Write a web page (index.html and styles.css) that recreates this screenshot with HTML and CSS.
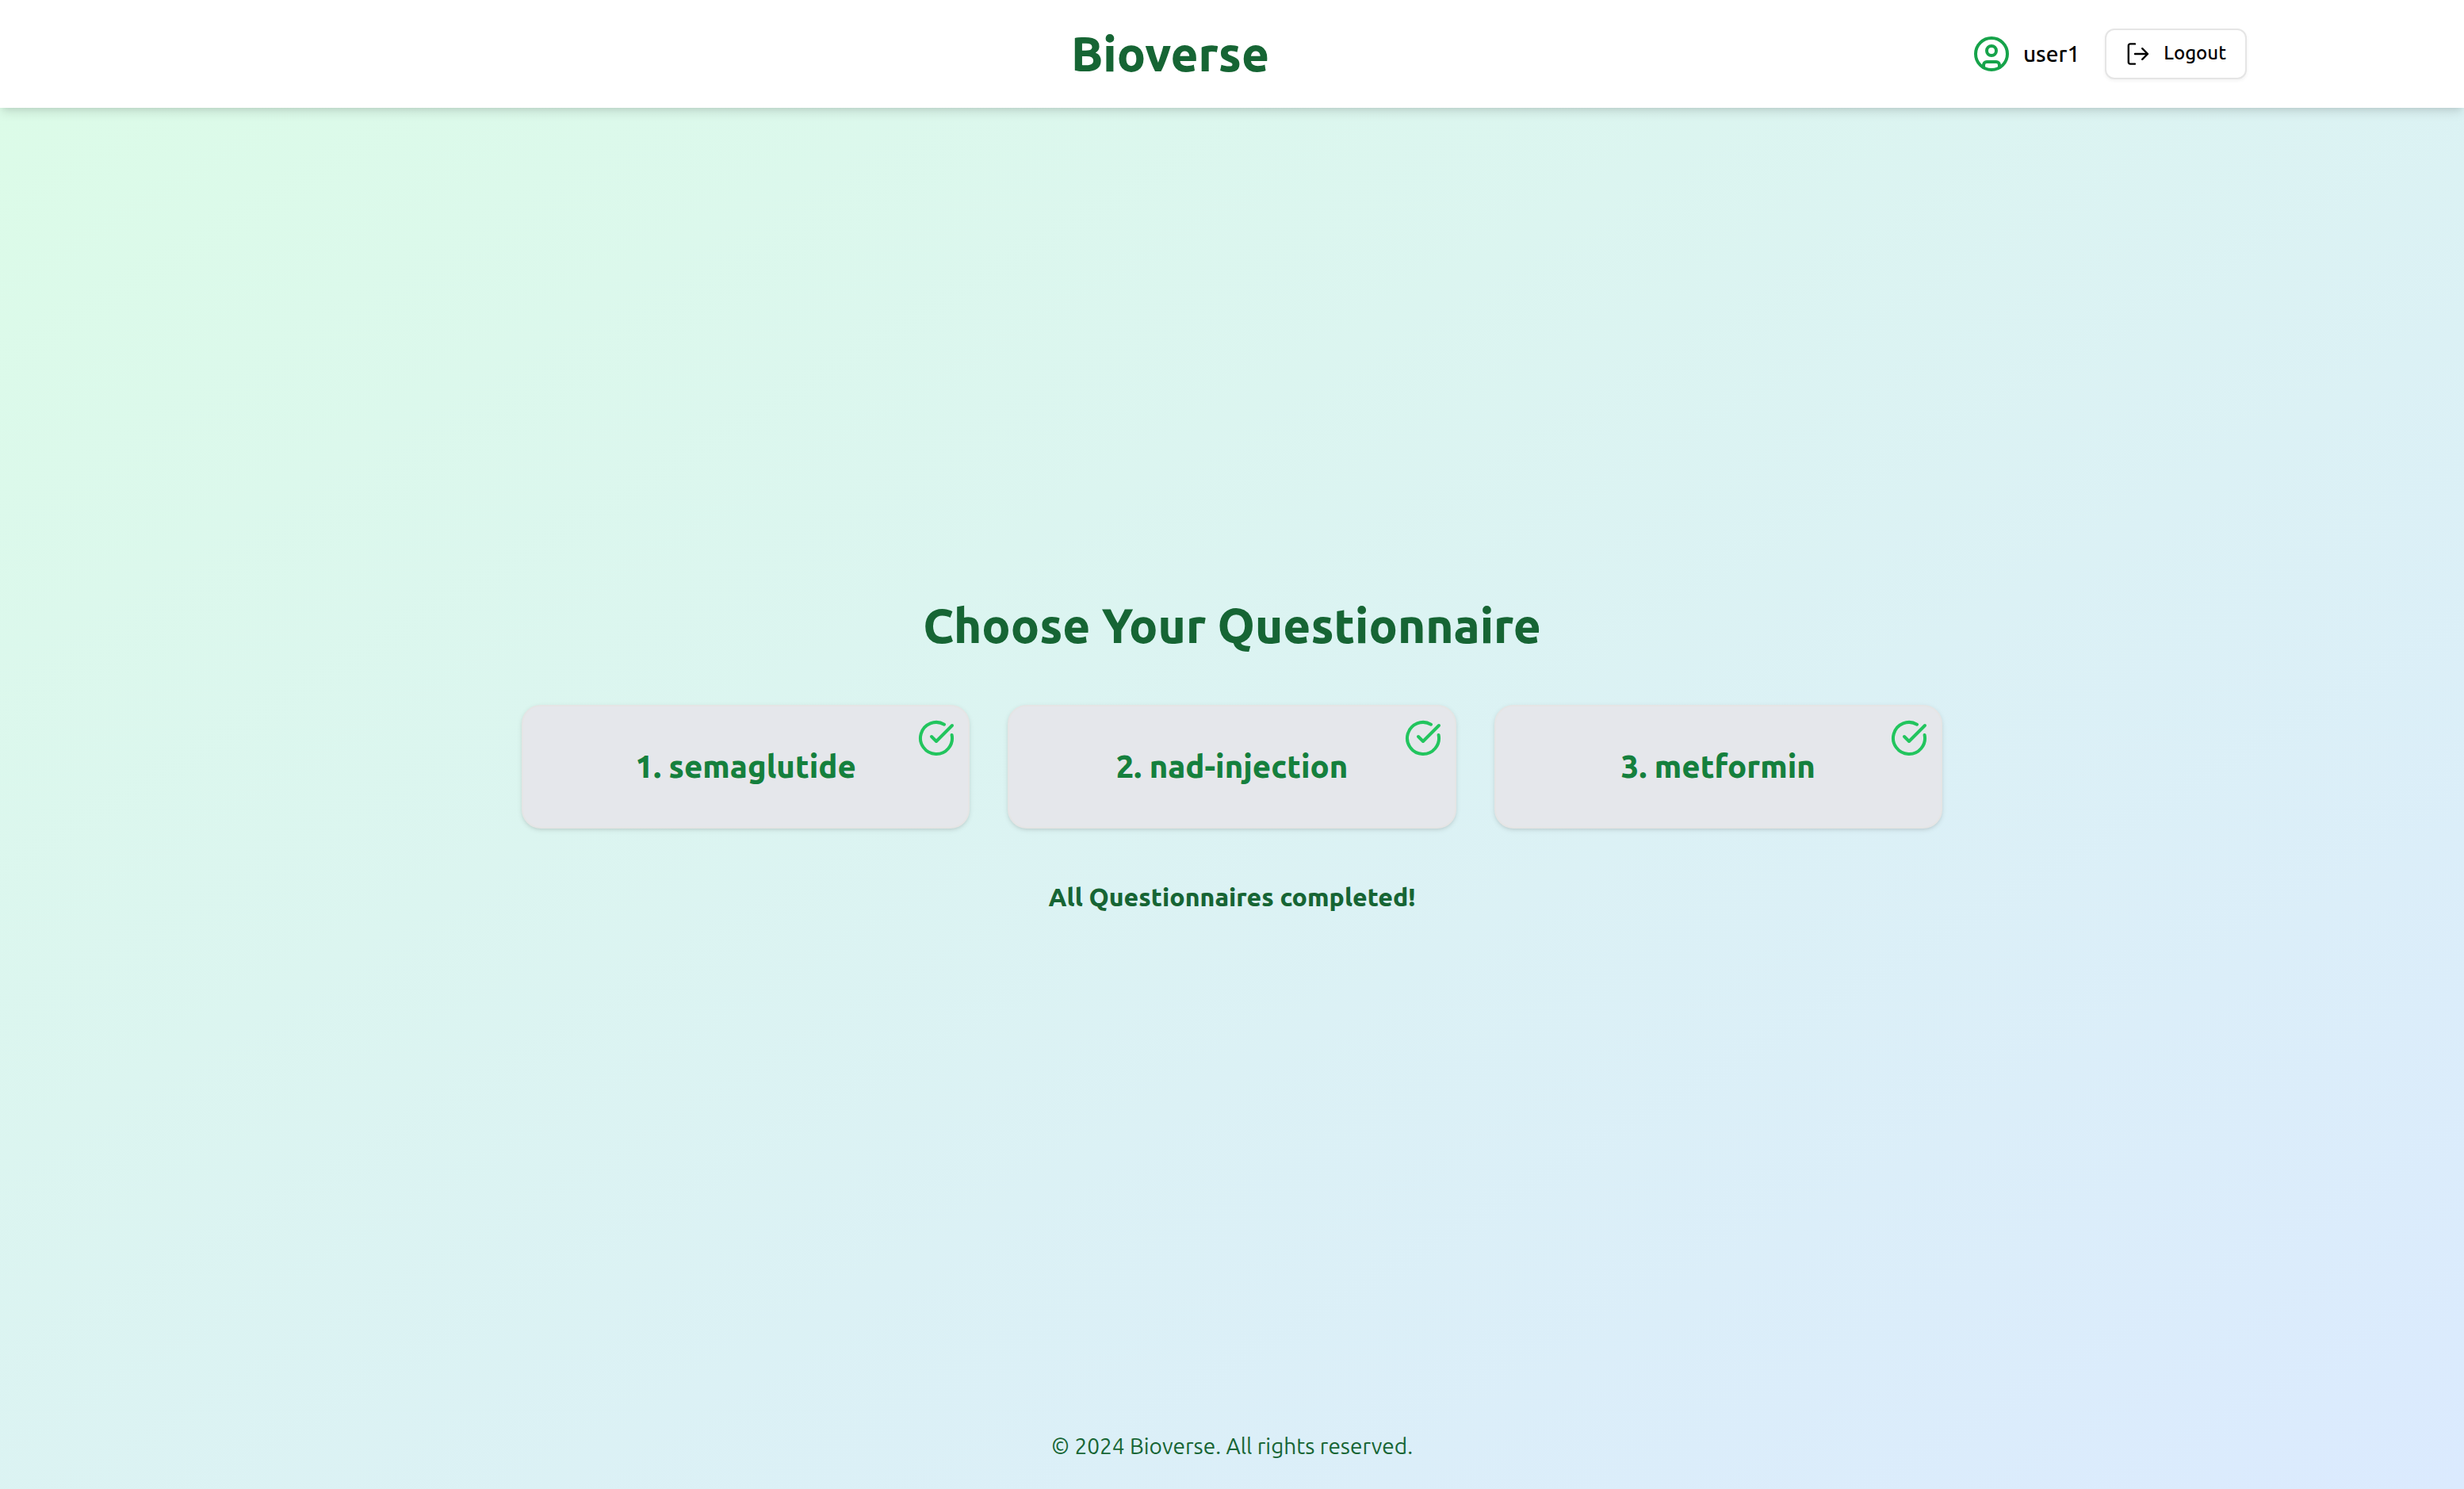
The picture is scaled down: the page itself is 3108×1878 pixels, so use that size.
FILE: index.html
```html
<!DOCTYPE html>
<html lang="en">
<head>
<meta charset="utf-8">
<meta name="viewport" content="width=device-width, initial-scale=1">
<title>Bioverse</title>
<link rel="stylesheet" href="styles.css">
</head>
<body>
<svg class="sprite" aria-hidden="true">
  <symbol id="check" viewBox="0 0 24 24"><path d="M21.801 10A10 10 0 1 1 17 3.335"/><path d="m9 11 3 3L22 4"/></symbol>
</svg>
<div class="page">
  <header class="header">
    <div class="header-inner">
      <div class="header-spacer"></div>
      <h1 class="title">Bioverse</h1>
      <div class="account">
        <div class="user">
          <svg class="icon icon-user" viewBox="0 0 24 24" aria-hidden="true"><circle cx="12" cy="12" r="10"/><circle cx="12" cy="10" r="3"/><path d="M7 20.662V19a2 2 0 0 1 2-2h6a2 2 0 0 1 2 2v1.662"/></svg>
          <span class="user-name">user1</span>
        </div>
        <button class="logout" type="button">
          <svg class="icon icon-logout" viewBox="0 0 32 32" aria-hidden="true"><path d="M12 3.4H6a2.2 2.2 0 0 0-2.2 2.2v20.8a2.2 2.2 0 0 0 2.2 2.2h6M12 16h16M21.2 9.2l6.8 6.8-6.8 6.8"/></svg>
          <span class="logout-label">Logout</span>
        </button>
      </div>
    </div>
  </header>
  <main class="main">
    <h2 class="title">Choose Your Questionnaire</h2>
    <div class="cards">
      <button class="card" type="button">1. semaglutide<svg class="icon card-check" aria-hidden="true"><use href="#check"/></svg></button>
      <button class="card" type="button">2. nad-injection<svg class="icon card-check" aria-hidden="true"><use href="#check"/></svg></button>
      <button class="card" type="button">3. metformin<svg class="icon card-check" aria-hidden="true"><use href="#check"/></svg></button>
    </div>
    <p class="status">All Questionnaires completed!</p>
  </main>
  <footer class="footer">© 2024 Bioverse. All rights reserved.</footer>
</div>
</body>
</html>
```
FILE: styles.css
```css
* { box-sizing: border-box; margin: 0; }

body {
  font-family: Ubuntu, "Noto Sans", sans-serif;
  color: #000;
}

button { font: inherit; color: inherit; }

.sprite { display: none; }

.page {
  display: flex;
  flex-direction: column;
  min-height: 100vh;
  background: linear-gradient(to bottom right, #dcfce7, #dbeafe);
}

.header {
  padding: 32px;
  background: #fff;
  box-shadow: 0 8px 12px -2px rgb(0 0 0 / 0.1), 0 4px 8px -4px rgb(0 0 0 / 0.1);
}

.header-inner {
  display: flex;
  align-items: center;
  justify-content: space-between;
  max-width: 2560px;
  height: 72px;
  margin: 0 auto;
}

.header-spacer { width: 190px; }

.title {
  font-size: 60px;
  font-weight: 800;
  line-height: 72px;
  color: #166534;
}

.account { display: flex; align-items: center; gap: 32px; }

.user { display: flex; align-items: center; gap: 16px; }

.user-name { font-size: 28px; font-weight: 500; line-height: 40px; }

.icon {
  width: 48px;
  height: 48px;
  fill: none;
  stroke: currentColor;
  stroke-width: 2;
  stroke-linecap: round;
  stroke-linejoin: round;
}

.icon-user { color: #16a34a; }

.icon-logout { width: 32px; height: 32px; stroke-width: 2.4; }

.logout {
  display: flex;
  align-items: center;
  gap: 16px;
  height: 64px;
  padding: 0 24px;
  border: 2px solid #e5e5e5;
  border-radius: 12px;
  background: #fff;
  box-shadow: 0 2px 4px rgb(0 0 0 / 0.05);
  font-size: 24px;
  font-weight: 500;
}

.logout-label { padding-bottom: 4px; }

.main {
  display: flex;
  flex: 1;
  flex-direction: column;
  align-items: center;
  justify-content: center;
  gap: 64px;
  padding: 0 32px 4px;
}

.cards {
  display: grid;
  grid-template-columns: repeat(3, 1fr);
  gap: 48px;
  width: 100%;
  max-width: 1792px;
}

.card {
  position: relative;
  padding: 48px;
  border: 2px solid #e5e5e5;
  border-radius: 24px;
  background: #e5e7eb;
  box-shadow: 0 2px 6px rgb(0 0 0 / 0.1), 0 2px 4px -2px rgb(0 0 0 / 0.1);
  font-size: 40px;
  font-weight: 800;
  line-height: 56px;
  color: #15803d;
}

.card-check {
  position: absolute;
  top: 16px;
  right: 16px;
  color: #22c55e;
}

.status {
  font-size: 32px;
  font-weight: 800;
  line-height: 44px;
  color: #166534;
}

.footer {
  padding: 30px 32px 34px;
  font-size: 28px;
  font-weight: 400;
  line-height: 40px;
  text-align: center;
  color: #166534;
}
```
